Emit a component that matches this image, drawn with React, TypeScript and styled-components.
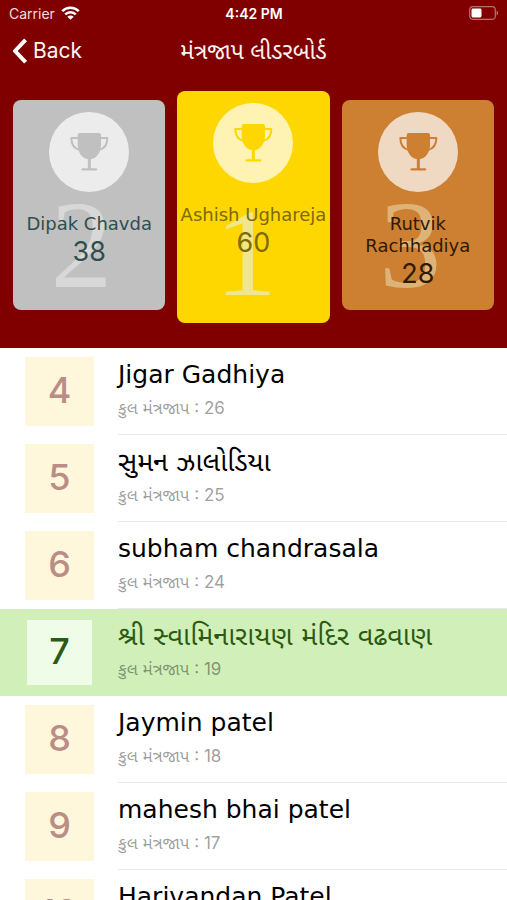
import React from "react";
import styled, { createGlobalStyle } from "styled-components";

const round = `"DejaVu Sans", "Noto Sans Gujarati", sans-serif`;
const plain = `Inter, "Noto Sans Gujarati", sans-serif`;

const GlobalStyle = createGlobalStyle`
  *, *::before, *::after { box-sizing: border-box; }
  html, body, #root { height: 100%; }
  body { margin: 0; background: #ffffff; font-family: ${plain}; color: #000000; }
`;

const Screen = styled.div`
  display: flex;
  flex-direction: column;
  height: 100%;
  overflow: hidden;
`;

const Header = styled.header`
  flex: none;
  background: #800000;
  color: #ffffff;
  padding-bottom: 25px;
`;

const StatusBar = styled.div`
  display: grid;
  grid-template-columns: 1fr auto 1fr;
  align-items: center;
  height: 26px;
  padding: 0 8px 0 9px;
  font-size: 14px;
`;

const Carrier = styled.span`
  display: flex;
  align-items: center;
  gap: 6px;
  color: #f1dede;
`;

const Clock = styled.span`
  font-weight: 600;
`;

const BatterySlot = styled.span`
  display: flex;
  justify-content: flex-end;
`;

const NavBar = styled.nav`
  display: grid;
  grid-template-columns: 1fr auto 1fr;
  align-items: center;
  height: 50px;
  padding: 0 12px;
`;

const BackButton = styled.button`
  display: flex;
  align-items: center;
  justify-self: start;
  gap: 6px;
  padding: 0;
  border: 0;
  background: none;
  color: #fff4f0;
  font: 400 21px/28px ${plain};
  cursor: pointer;
`;

const Title = styled.h1`
  margin: 0;
  font: 400 23px/28px ${plain};
  color: #fff4f0;
`;

const Podium = styled.ol`
  display: grid;
  grid-template-columns: repeat(3, 1fr);
  align-items: start;
  gap: 12px;
  margin: 0;
  padding: 15px 13px 0;
  list-style: none;
`;

const Card = styled.li<{ $bg: string; $ink: string; $tall?: boolean }>`
  position: relative;
  display: flex;
  flex-direction: column;
  align-items: center;
  height: ${(p) => (p.$tall ? 232 : 210)}px;
  margin-top: ${(p) => (p.$tall ? 0 : 9)}px;
  padding-top: 12px;
  border-radius: 8px;
  background: ${(p) => p.$bg};
  color: ${(p) => p.$ink};
  text-align: center;
`;

const Medal = styled.span`
  display: block;
  width: 80px;
  height: 80px;
  margin-bottom: 21px;
  border-radius: 50%;
  background: rgba(255, 255, 255, 0.7);
`;

const Watermark = styled.span<{ $tone: string; $tall?: boolean }>`
  position: absolute;
  top: ${(p) => (p.$tall ? 101 : 84)}px;
  left: 0;
  width: 90%;
  color: ${(p) => p.$tone};
  font: 400 124px/124px "Liberation Serif", serif;
`;

const CardName = styled.span`
  position: relative;
  font: 400 18px/22px ${round};
`;

const CardScore = styled.span`
  position: relative;
  font: 400 27px/34px ${plain};
`;

const List = styled.ol`
  flex: 1;
  min-height: 0;
  margin: 0;
  padding: 0;
  overflow: hidden;
  list-style: none;
`;

const Row = styled.li<{ $mine?: boolean }>`
  display: flex;
  align-items: center;
  gap: 24px;
  height: 87px;
  padding-left: 25px;
  background: ${(p) => (p.$mine ? "#d0efb9" : "#ffffff")};
  color: ${(p) => (p.$mine ? "#2c5a12" : "#000000")};
`;

const Rank = styled.span<{ $mine?: boolean }>`
  flex: none;
  display: flex;
  align-items: center;
  justify-content: center;
  width: 69px;
  height: 69px;
  padding-bottom: 3px;
  border: ${(p) => (p.$mine ? "2px solid #d0efb9" : "0")};
  background: ${(p) => (p.$mine ? "#effce8" : "#fff7dc")};
  color: ${(p) => (p.$mine ? "#2c5a12" : "#ba8d86")};
  font: 500 36px/40px ${plain};
`;

const Details = styled.div<{ $line: boolean }>`
  flex: 1;
  min-width: 0;
  height: 87px;
  padding-top: 11px;
  border-bottom: 1px solid ${(p) => (p.$line ? "#e8e8e8" : "transparent")};
  white-space: nowrap;
`;

const Name = styled.div`
  font: 400 25px/32px ${round};

  &:lang(gu) {
    font-size: 27px;
  }
`;

const Total = styled.div`
  margin-top: 5px;
  color: rgba(0, 0, 0, 0.4);
  font: 400 17px/24px ${plain};
`;

const Trophy = ({ color }: { color: string }) => (
  <svg viewBox="0 0 240 240" width="80" height="80" fill="none" stroke={color} aria-hidden="true">
    <path
      d="M92 63h58q6 0 6 6v30c0 24-16 43-35 43s-35-19-35-43V69q0-6 6-6z"
      fill={color}
      stroke="none"
    />
    <path d="M88 78H67c0 20 9 32 25 36M154 78h21c0 20-9 32-25 36" strokeWidth="6" strokeLinejoin="round" />
    <path d="M121 138v33" strokeWidth="9" />
    <path d="M101 172h40" strokeWidth="7" strokeLinecap="round" />
  </svg>
);

const Wifi = () => (
  <svg width="19" height="14" viewBox="0 0 19 14" fill="none" stroke="#ffffff" aria-hidden="true">
    <path d="M1.2 5.2C5.8.6 13.2.6 17.8 5.2M4.2 8.4c3-2.9 7.6-2.9 10.6 0" strokeWidth="2.5" />
    <path d="M9.5 13.8 6.3 10.7c1.8-1.7 4.6-1.7 6.4 0z" fill="#ffffff" stroke="none" />
  </svg>
);

const Battery = () => (
  <svg width="30" height="14" viewBox="0 0 30 14" aria-hidden="true">
    <rect x=".7" y=".7" width="25.6" height="12.6" rx="3.2" fill="none" stroke="#b97070" strokeWidth="1.2" />
    <rect x="2.5" y="2.5" width="10" height="9" rx="1.4" fill="#ffffff" />
    <path d="M27.6 4.6c2 .8 2 4 0 4.8z" fill="#b97070" />
  </svg>
);

const Chevron = () => (
  <svg
    width="15"
    height="26"
    viewBox="0 0 15 26"
    fill="none"
    stroke="#ffffff"
    strokeWidth="4"
    strokeLinejoin="round"
    aria-hidden="true"
  >
    <path d="M13.6 1.8 3 13l10.6 11.2" />
  </svg>
);

const leaders = [
  { place: 2, name: "Dipak Chavda", score: 38, bg: "#c0c0c0", ink: "#2f4f4f", tone: "#d8d8d8" },
  { place: 1, name: "Ashish Ughareja", score: 60, bg: "#ffd700", ink: "#7d6a08", tone: "#f0e68c", tall: true },
  { place: 3, name: "Rutvik Rachhadiya", score: 28, bg: "#cd7f32", ink: "#2e1a05", tone: "#deb377" },
];

const players = [
  { rank: 4, name: "Jigar Gadhiya", total: 26 },
  { rank: 5, name: "સુમન ઝાલોડિયા", lang: "gu", total: 25 },
  { rank: 6, name: "subham chandrasala", total: 24 },
  { rank: 7, name: "શ્રી સ્વામિનારાયણ મંદિર વઢવાણ", lang: "gu", total: 19, mine: true },
  { rank: 8, name: "Jaymin patel", total: 18 },
  { rank: 9, name: "mahesh bhai patel", total: 17 },
  { rank: 10, name: "Harivandan Patel", total: 16 },
];

export default function App() {
  return (
    <>
      <GlobalStyle />
      <Screen>
        <Header>
          <StatusBar>
            <Carrier>
              Carrier
              <Wifi />
            </Carrier>
            <Clock>4:42 PM</Clock>
            <BatterySlot>
              <Battery />
            </BatterySlot>
          </StatusBar>
          <NavBar>
            <BackButton type="button">
              <Chevron />
              Back
            </BackButton>
            <Title lang="gu">મંત્રજાપ લીડરબોર્ડ</Title>
          </NavBar>
          <Podium>
            {leaders.map((l) => (
              <Card key={l.place} $bg={l.bg} $ink={l.ink} $tall={l.tall}>
                <Watermark $tone={l.tone} $tall={l.tall}>
                  {l.place}
                </Watermark>
                <Medal>
                  <Trophy color={l.bg} />
                </Medal>
                <CardName>{l.name}</CardName>
                <CardScore>{l.score}</CardScore>
              </Card>
            ))}
          </Podium>
        </Header>
        <List>
          {players.map((p) => (
            <Row key={p.rank} $mine={p.mine}>
              <Rank $mine={p.mine}>{p.rank}</Rank>
              <Details $line={!p.mine}>
                <Name lang={p.lang}>{p.name}</Name>
                <Total>કુલ મંત્રજાપ : {p.total}</Total>
              </Details>
            </Row>
          ))}
        </List>
      </Screen>
    </>
  );
}
